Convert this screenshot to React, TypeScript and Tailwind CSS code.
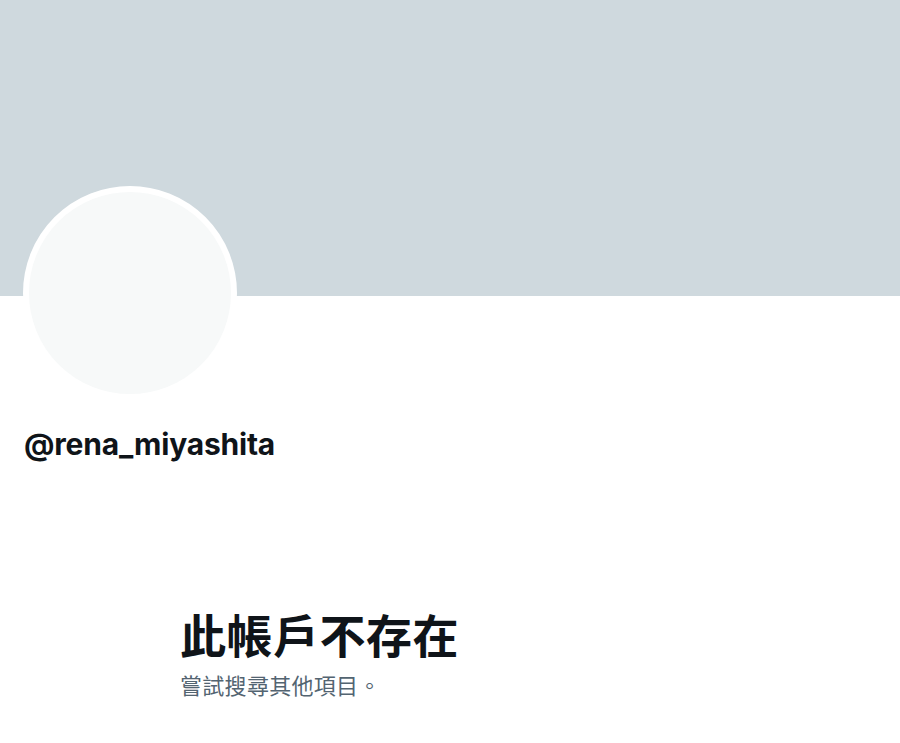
export default function App() {
  return (
    <div className="min-h-screen bg-white font-['Inter','Noto_Sans_CJK_TC',sans-serif] text-[#0f1419]">
      {/* Banner */}
      <div className="h-[296px] w-full bg-[#cfd9de]" />

      {/* Avatar */}
      <div className="px-[23px]">
        <div className="-mt-[110px] h-[214px] w-[214px] rounded-full border-[6px] border-white bg-[#f7f9f9]" />
      </div>

      {/* Username */}
      <div className="px-6 pt-[26px]">
        <h2 className="text-[30px] font-bold leading-[36px] tracking-[-0.2px]">@rena_miyashita</h2>
      </div>

      {/* Empty state */}
      <div className="mt-[146px] pl-[180px]">
        <h1 className="text-[46px] font-bold leading-[56px] tracking-[0.5px]">此帳戶不存在</h1>
        <p className="mt-[8px] text-[22px] leading-[28px] tracking-[0.3px] text-[#536471]">嘗試搜尋其他項目。</p>
      </div>
    </div>
  );
}
